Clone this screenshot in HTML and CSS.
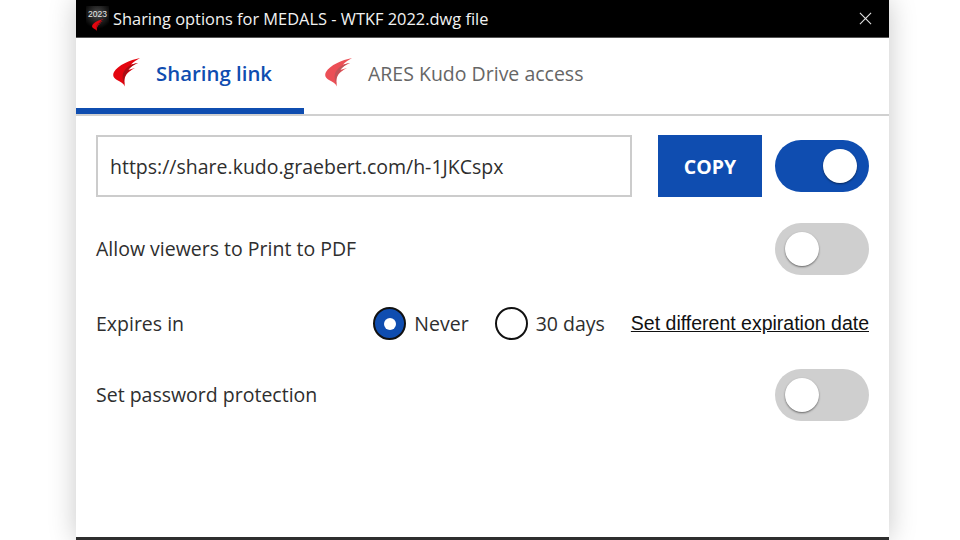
FILE: index.html
```html
<!DOCTYPE html>
<html lang="en">
<head>
  <meta charset="UTF-8">
  <meta name="viewport" content="width=device-width, initial-scale=1.0">
  <title>Sharing options</title>
  <link rel="stylesheet" href="styles.css">
</head>
<body>

  <svg class="defs" width="0" height="0">
    <symbol id="swoosh" viewBox="0 0 28 30">
      <path class="swoosh-main" d="M27 0C17 2 5 7 1 14C-1 18 1 20 4 22C8 24 11 26 12 28.500C11 24 11 21 13 17C15 14 18 12 22 10L15 12C17 9 20 7 25 5L18 6.500C20 4 24 2 27 0Z"/>
      <path class="swoosh-dark" d="M25 5C18 6 12 10 10 15.500C9 19 10 23 11.500 26.500C11 22 11 19.500 13 16.500C14 14.500 16 13 18 12L15 12.500C17 9 20 7 25 5Z"/>
    </symbol>
  </svg>

  <div class="dialog">
    <!-- Title bar -->
    <div class="titlebar">
      <div class="app-icon">
        <span class="app-year">2023</span>
        <svg class="app-swoosh"><use href="#swoosh"/></svg>
      </div>
      <span class="title">Sharing options for MEDALS - WTKF 2022.dwg file</span>
      <svg class="close" viewBox="0 0 14 14">
        <path d="M1 1L13 13M13 1L1 13"/>
      </svg>
    </div>

    <!-- Tabs -->
    <div class="tabs">
      <div class="tab active">
        <svg class="tab-icon"><use href="#swoosh"/></svg>
        <span>Sharing link</span>
      </div>
      <div class="tab">
        <svg class="tab-icon"><use href="#swoosh"/></svg>
        <span>ARES Kudo Drive access</span>
      </div>
    </div>

    <div class="content">
      <div class="row link-row">
        <div class="link-input">https://share.kudo.graebert.com/h-1JKCspx</div>
        <button class="copy-btn">COPY</button>
        <div class="toggle on"><span class="knob"></span></div>
      </div>

      <div class="row print-row">
        <span class="option-label">Allow viewers to Print to PDF</span>
        <div class="toggle"><span class="knob"></span></div>
      </div>

      <div class="row expires-row">
        <span class="expires-label">Expires in</span>
        <div class="radio checked"></div>
        <span class="radio-label never">Never</span>
        <div class="radio"></div>
        <span class="radio-label days">30 days</span>
        <a class="expire-link" href="#">Set different expiration date</a>
      </div>

      <div class="row password-row">
        <span class="option-label">Set password protection</span>
        <div class="toggle"><span class="knob"></span></div>
      </div>
    </div>
  </div>

</body>
</html>
```

FILE: styles.css
```css
html, body {
  height: 100%;
}

body {
  margin: 0;
  background-color: #ffffff;
  font-family: "Open Sans", "Noto Sans", sans-serif;
  color: #2e2e2e;
  overflow: hidden;
}

.defs {
  display: block;
  height: 0;
}

.swoosh-main {
  fill: #e4050f;
}

.swoosh-dark {
  fill: #a80d14;
}

.dialog {
  width: 813px;
  height: 540px;
  margin-left: 76px;
  box-sizing: border-box;
  background-color: #ffffff;
  border-bottom: 3px solid #2e2e2e;
  box-shadow: 0 0 26px rgba(0, 0, 0, 0.22);
}

.titlebar {
  display: flex;
  align-items: center;
  height: 37px;
  padding-left: 10px;
  padding-right: 17px;
  background-color: #000000;
  border-bottom: 1px solid #555555;
  color: #f2f2f2;
}

.app-icon {
  display: flex;
  flex-direction: column;
  align-items: center;
  width: 23px;
  height: 26px;
  margin-right: 4px;
  background: radial-gradient(circle at 50% 30%, #4a4a4a, #000000 70%);
}

.app-year {
  font-family: "Liberation Sans", sans-serif;
  font-size: 8.500px;
  line-height: 9px;
  color: #e8e8e8;
  margin-top: 4px;
}

.app-swoosh {
  width: 12px;
  height: 13px;
}

.title {
  font-size: 16.400px;
  flex: 1;
}

.close {
  width: 13px;
  height: 13px;
  fill: none;
  stroke: #e0e0e0;
  stroke-width: 1.200;
}

.tabs {
  display: flex;
  height: 76px;
  border-bottom: 2px solid #d0d0d0;
}

.tab {
  display: flex;
  align-items: center;
  height: 70px;
  padding-left: 37px;
  font-size: 19.500px;
  color: #666666;
}

.tab.active {
  width: 191px;
  border-bottom: 6px solid #0f4db0;
  color: #0f4db0;
  font-size: 20.400px;
  font-weight: 600;
}

.tab-icon {
  width: 28px;
  height: 30px;
  margin-right: 15px;
}

.tab:not(.active) {
  padding-left: 21px;
  margin-bottom: 6px;
}

.tab:not(.active) .tab-icon {
  opacity: 0.7;
}

.content {
  padding: 19px 20px 0;
  font-size: 19.500px;
}

.row {
  display: flex;
  align-items: center;
  justify-content: space-between;
  white-space: nowrap;
}

.option-label {
  padding-bottom: 2px;
}

.link-row {
  height: 62px;
}

.link-input {
  width: 536px;
  height: 62px;
  box-sizing: border-box;
  padding-left: 12px;
  border: 2px solid #cccccc;
  line-height: 60px;
}

.copy-btn {
  width: 104px;
  height: 62px;
  margin-left: 26px;
  margin-right: 13px;
  border: none;
  background-color: #0f4db0;
  color: #ffffff;
  font-family: inherit;
  font-size: 19.500px;
  font-weight: 700;
}

.toggle {
  display: flex;
  align-items: center;
  flex: none;
  width: 94px;
  height: 52px;
  border-radius: 26px;
  background-color: #cfcfcf;
}

.toggle .knob {
  width: 34px;
  height: 34px;
  margin-left: 10px;
  border-radius: 50%;
  background-color: #ffffff;
  box-shadow: 0 1px 2px rgba(0, 0, 0, 0.5);
}

.toggle.on {
  justify-content: flex-end;
  background-color: #0f4db0;
}

.toggle.on .knob {
  margin-left: 0;
  margin-right: 12px;
}

.print-row {
  margin-top: 26px;
  height: 52px;
}

.expires-row {
  margin-top: 23px;
  height: 51px;
  justify-content: flex-start;
}

.expires-label {
  width: 278px;
}

.radio {
  flex: none;
  width: 33px;
  height: 33px;
  box-sizing: border-box;
  border: 2px solid #111111;
  border-radius: 50%;
  background-color: #ffffff;
}

.radio.checked {
  background-color: #0f4db0;
  position: relative;
}

.radio.checked::after {
  content: "";
  position: absolute;
  top: 8.500px;
  left: 8.500px;
  width: 12px;
  height: 12px;
  border-radius: 50%;
  background-color: #ffffff;
}

.radio-label {
  margin-left: 8px;
}

.never {
  margin-right: 26px;
}

.days {
  margin-right: 26px;
}

.expire-link {
  font-family: "Liberation Sans", Arial, sans-serif;
  font-size: 19.500px;
  color: #111111;
  white-space: nowrap;
}

.password-row {
  margin-top: 20px;
  height: 52px;
}
```
